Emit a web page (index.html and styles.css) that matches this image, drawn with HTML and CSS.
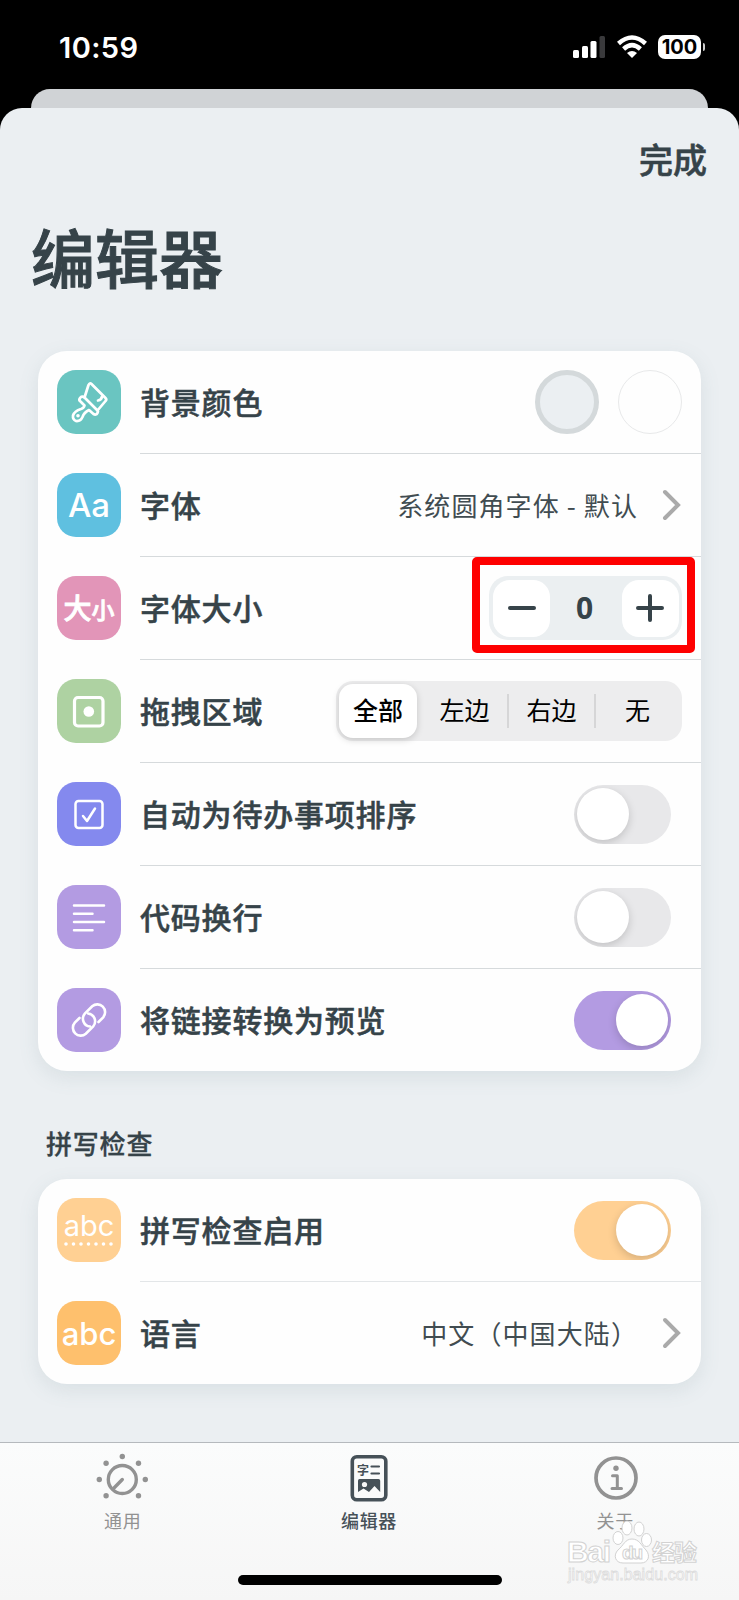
FILE: index.html
```html
<!DOCTYPE html>
<html lang="zh-CN">
<head>
    <meta charset="UTF-8">
    <meta name="viewport" content="width=device-width, initial-scale=1.0">
    <title>编辑器</title>
    <link rel="stylesheet" href="styles.css">
</head>
<body>
    <header class="status-bar">
        <span class="time">10:59</span>
        <div class="status-icons">
            <svg class="signal" width="32" height="22" viewBox="0 0 32 22" fill="#fff">
                <rect x="0" y="14" width="6" height="8" rx="1.5"/>
                <rect x="9" y="10" width="6" height="12" rx="1.5"/>
                <rect x="17.5" y="5" width="6" height="17" rx="1.5"/>
                <rect x="26.5" y="0" width="5.5" height="22" rx="1.5" fill="#3a3a3c"/>
            </svg>
            <svg class="wifi" width="32" height="24" viewBox="0 0 32 24">
                <path d="M2.5 8.500Q16-3.500 29.500 8.500M7.600 14Q16 6.300 24.400 14" fill="none" stroke="#fff" stroke-width="4.500"/>
                <path d="M11 18Q16 13.800 21 18L16 23Z" fill="#fff"/>
            </svg>
            <div class="battery"><span>100</span></div>
        </div>
    </header>

    <div class="sheet-behind"></div>
    <main class="sheet">
        <div class="nav"><button class="done">完成</button></div>
        <h1>编辑器</h1>

        <section class="card">
            <div class="row">
                <div class="icon teal">
                    <svg width="64" height="64" viewBox="0 0 64 64" fill="none" stroke="#fff" stroke-width="2.700" stroke-linecap="round" stroke-linejoin="round">
                        <path d="M34.500 14L48.500 28Q50 29.500 48.500 31L40.500 40.500L27.500 27.500L31.500 15Q32.800 12.500 34.500 14Z"/>
                        <path d="M27.500 27.500Q25 25.500 23 28Q21.500 30 23.500 31.500L27.500 35.500Q27 38 24 39Q17.500 41 16 45.500Q15.500 49.500 19 51Q23.500 51.500 25.500 47Q27 42.500 32 40L36.500 44Q39 45.500 40.500 43Q41.500 41.500 40.500 40.500M41 30.500Q44.500 30 45 26.500"/>
                        <circle cx="21" cy="45.800" r="1.800" fill="#fff" stroke="none"/>
                    </svg>
                </div>
                <div class="row-body">
                    <span class="label">背景颜色</span>
                    <div class="swatches">
                        <span class="swatch selected"></span>
                        <span class="swatch"></span>
                    </div>
                </div>
            </div>
            <div class="row">
                <div class="icon blue"><span class="glyph-aa">Aa</span></div>
                <div class="row-body">
                    <span class="label">字体</span>
                    <span class="value">系统圆角字体 - 默认</span>
                    <svg class="chevron" width="19" height="32" viewBox="0 0 19 32"><path d="M3 3L16 16L3 29"/></svg>
                </div>
            </div>
            <div class="row">
                <div class="icon pink"><span class="glyph-size">大<small>小</small></span></div>
                <div class="row-body">
                    <span class="label">字体大小</span>
                    <div class="stepper">
                        <button><svg width="28" height="28" viewBox="0 0 28 28"><path d="M2 14H26"/></svg></button>
                        <span>0</span>
                        <button><svg width="28" height="28" viewBox="0 0 28 28"><path d="M2 14H26M14 2V26"/></svg></button>
                        <div class="highlight"></div>
                    </div>
                </div>
            </div>
            <div class="row">
                <div class="icon green">
                    <svg width="64" height="64" viewBox="0 0 64 64">
                        <rect x="17.500" y="18.500" width="28.500" height="28.500" rx="3.500" fill="none" stroke="#fff" stroke-width="3.200"/>
                        <circle cx="31.800" cy="32.500" r="5.300" fill="#fff"/>
                    </svg>
                </div>
                <div class="row-body">
                    <span class="label">拖拽区域</span>
                    <div class="segmented">
                        <span class="active">全部</span>
                        <span>左边</span>
                        <span>右边</span>
                        <span>无</span>
                    </div>
                </div>
            </div>
            <div class="row">
                <div class="icon indigo">
                    <svg width="64" height="64" viewBox="0 0 64 64" fill="none" stroke="#fff" stroke-width="2.500" stroke-linecap="round" stroke-linejoin="round">
                        <rect x="18.500" y="19" width="27" height="27" rx="3"/>
                        <path d="M26 34L30 39L38 26.500"/>
                    </svg>
                </div>
                <div class="row-body">
                    <span class="label">自动为待办事项排序</span>
                    <span class="toggle"></span>
                </div>
            </div>
            <div class="row">
                <div class="icon purple">
                    <svg width="64" height="64" viewBox="0 0 64 64" fill="none" stroke="#fff" stroke-width="2.500" stroke-linecap="round">
                        <path d="M17 20.500H47M17 28.700H35.500M17 37H47M17 45.200H35.500"/>
                    </svg>
                </div>
                <div class="row-body">
                    <span class="label">代码换行</span>
                    <span class="toggle"></span>
                </div>
            </div>
            <div class="row">
                <div class="icon purple">
                    <svg width="64" height="64" viewBox="0 0 64 64" fill="none" stroke="#fff" stroke-width="2.600" stroke-linecap="round">
                        <path d="M41.500 34L46.200 29.300A7.800 7.800 0 0 0 35.200 18.300L27.800 25.700A7.800 7.800 0 0 0 33 38.500"/>
                        <path d="M22.500 30L17.800 34.700A7.800 7.800 0 0 0 28.800 45.700L36.200 38.300A7.800 7.800 0 0 0 31 25.500"/>
                    </svg>
                </div>
                <div class="row-body">
                    <span class="label">将链接转换为预览</span>
                    <span class="toggle on"></span>
                </div>
            </div>
        </section>

        <h2>拼写检查</h2>
        <section class="card light">
            <div class="row">
                <div class="icon peach">
                    <div class="spell">
                        <span>abc</span>
                        <svg width="50" height="4" viewBox="0 0 50 4"><path d="M2 2H49"/></svg>
                    </div>
                </div>
                <div class="row-body">
                    <span class="label">拼写检查启用</span>
                    <span class="toggle on orange"></span>
                </div>
            </div>
            <div class="row">
                <div class="icon amber"><span class="glyph-abc">abc</span></div>
                <div class="row-body">
                    <span class="label">语言</span>
                    <span class="value">中文（中国大陆）</span>
                    <svg class="chevron" width="19" height="32" viewBox="0 0 19 32"><path d="M3 3L16 16L3 29"/></svg>
                </div>
            </div>
        </section>
    </main>

    <nav class="tab-bar">
        <a class="tab">
            <svg width="54" height="54" viewBox="0 0 54 54">
                <circle cx="26.300" cy="27.500" r="14" fill="none" stroke="#929292" stroke-width="3.400"/>
                <path d="M26.300 27.500L18 36" stroke="#929292" stroke-width="3.400" stroke-linecap="round"/>
                <g fill="#929292">
                    <circle cx="26.300" cy="4.500" r="2.700"/>
                    <circle cx="10.100" cy="11.300" r="2.700"/>
                    <circle cx="42.500" cy="11.300" r="2.700"/>
                    <circle cx="3.300" cy="27.500" r="2.700"/>
                    <circle cx="49.300" cy="27.500" r="2.700"/>
                    <circle cx="10.100" cy="43.700" r="2.700"/>
                    <circle cx="42.500" cy="43.700" r="2.700"/>
                </g>
            </svg>
            <span>通用</span>
        </a>
        <a class="tab current">
            <svg width="54" height="54" viewBox="0 0 54 54">
                <rect x="10.300" y="4.800" width="33.500" height="43" rx="4.500" fill="none" stroke="#465158" stroke-width="3.600"/>
                <text x="15" y="22.500" class="doc-char">字</text>
                <path d="M29.500 14.500H37M29.500 21.500H37" stroke="#465158" stroke-width="2.200" stroke-linecap="round"/>
                <path d="M17.500 27H36.500Q38.200 27 38.200 28.700V40L32.500 34L27 40L21.500 36.500L16 40V28.700Q16 27 17.500 27Z" fill="#465158"/>
                <circle cx="22.500" cy="32.500" r="2.600" fill="#f8f8f8"/>
            </svg>
            <span>编辑器</span>
        </a>
        <a class="tab">
            <svg width="54" height="54" viewBox="0 0 54 54" fill="none" stroke="#929292" stroke-linecap="round" stroke-linejoin="round">
                <circle cx="27" cy="26" r="20" stroke-width="3.700"/>
                <path d="M23.500 23.800H28.300V36.500M23 36.500H32.500" stroke-width="3"/>
                <circle cx="27" cy="16.300" r="2.700" fill="#929292" stroke="none"/>
            </svg>
            <span>关于</span>
        </a>
        <div class="home-indicator"></div>
        <svg class="watermark" width="140" height="70" viewBox="0 0 140 70">
            <g class="mark">
                <text x="5" y="46" font-size="30" textLength="44">Bai</text>
                <ellipse cx="56" cy="22" rx="5" ry="6.500"/>
                <ellipse cx="65" cy="12" rx="5" ry="7"/>
                <ellipse cx="77" cy="13" rx="5" ry="7"/>
                <ellipse cx="84.500" cy="24" rx="5" ry="6.500"/>
                <path d="M70 23C77 23 79 29 84 34C89 40 86 47 79 47H61C53 47 51 39 56 34C62 29 63 23 70 23Z"/>
                <text x="60" y="43" font-size="19" textLength="21">du</text>
                <text x="90" y="45" font-size="23" textLength="45">经验</text>
            </g>
            <text class="mark-url" x="6" y="64" font-size="16" textLength="130">jingyan.baidu.com</text>
        </svg>
    </nav>
</body>
</html>
```
FILE: styles.css
```css
* {
    box-sizing: border-box;
}
body {
    margin: 0;
    width: 739px;
    height: 1600px;
    display: flex;
    flex-direction: column;
    overflow: hidden;
    background-color: #000;
    color: #364349;
    font-family: "Noto Sans CJK SC", sans-serif;
}
button {
    border: none;
    padding: 0;
    font-family: inherit;
    color: inherit;
    cursor: pointer;
}
svg {
    display: block;
}

/* status bar */
.status-bar {
    flex: none;
    height: 89px;
    padding: 7px 34px 0 59px;
    display: flex;
    justify-content: space-between;
    align-items: center;
    color: #fff;
}
.time {
    font-family: Inter, sans-serif;
    font-size: 29px;
    font-weight: 600;
    line-height: 40px;
    letter-spacing: 0.4px;
    padding-bottom: 1px;
}
.status-icons {
    display: flex;
    align-items: center;
    gap: 11px;
    padding-bottom: 3px;
}
.wifi {
    margin-right: -1px;
}
.battery {
    width: 43px;
    height: 24px;
    margin-right: 4px;
    border-radius: 7px;
    background-color: #fff;
    color: #000;
    position: relative;
    text-align: center;
    font: 700 20px/24px Inter, sans-serif;
}
.battery::after {
    content: "";
    position: absolute;
    left: 45px;
    top: 8px;
    width: 2px;
    height: 8px;
    border-radius: 0 2px 2px 0;
    background-color: #ccc;
}

/* sheet */
.sheet-behind {
    flex: none;
    height: 19px;
    margin: 0 31px;
    border-radius: 19px 19px 0 0;
    background-color: #d0d3d6;
}
.sheet {
    flex: none;
    height: 1334px;
    padding: 27px 38px 0;
    border-radius: 22px 22px 0 0;
    background-color: #ebeff2;
}
.nav {
    display: flex;
    justify-content: flex-end;
    height: 48px;
    margin-right: -6px;
}
.done {
    background: none;
    font-size: 34px;
    font-weight: 500;
    line-height: 48px;
    -webkit-text-stroke: 0.6px #364349;
}
h1 {
    margin: 28px 0 0 -7px;
    height: 90px;
    font-size: 64px;
    font-weight: 500;
    line-height: 88px;
    -webkit-text-stroke: 1px #364349;
}
h2 {
    margin: 52px 0 16px 8px;
    height: 40px;
    font-size: 26px;
    font-weight: 500;
    line-height: 40px;
    letter-spacing: 0.8px;
    -webkit-text-stroke: 0.3px #364349;
}
.card {
    margin-top: 50px;
    border-radius: 29px;
    background-color: #fefefe;
    width: 663px;
    box-shadow: 0 6px 20px rgba(90, 120, 130, 0.13);
}
.card.light {
    margin-top: 0;
}
.row {
    display: flex;
    align-items: center;
    height: 103px;
    padding-left: 19px;
}
.row:last-child {
    height: 102px;
}
.row-body {
    flex: 1;
    height: 100%;
    margin-left: 19px;
    padding-right: 19px;
    display: flex;
    align-items: center;
    border-bottom: 1px solid #d6dadc;
}
.light .row-body {
    border-bottom-color: #e3e6e8;
}
.row:last-child .row-body {
    border-bottom: none;
}
.label {
    flex: 1;
    padding-bottom: 3px;
    font-size: 30px;
    font-weight: 500;
    letter-spacing: 0.8px;
    -webkit-text-stroke: 0.5px #364349;
}
.value {
    padding-bottom: 2px;
    font-size: 26px;
    letter-spacing: 1.1px;
    color: #414c51;
}
.chevron {
    margin: 0 1px 0 24px;
    fill: none;
    stroke: #aaa;
    stroke-width: 4;
    stroke-linecap: round;
}

/* row icons */
.icon {
    flex: none;
    width: 64px;
    height: 64px;
    margin-bottom: 1px;
    border-radius: 19px;
    display: flex;
    justify-content: center;
    align-items: center;
    color: #fff;
}
.teal { background-color: #6ac5c1; }
.blue { background-color: #5fc0e0; }
.pink { background-color: #e295b8; }
.green { background-color: #aed2a2; }
.indigo { background-color: #8489ee; }
.purple { background-color: #b39be2; }
.peach { background-color: #ffd093; }
.amber { background-color: #fec06d; }

.glyph-aa {
    font: 500 33px/40px Inter, sans-serif;
}
.glyph-size {
    font-size: 28px;
    font-weight: 500;
    line-height: 40px;
    white-space: nowrap;
    -webkit-text-stroke: 0.8px #fff;
}
.glyph-size small {
    font-size: 23px;
}
.glyph-abc {
    padding-top: 3px;
    font: 500 31px/40px Inter, sans-serif;
}
.spell {
    font: 400 29px/32px Inter, sans-serif;
    display: flex;
    flex-direction: column;
    align-items: center;
    margin-bottom: 4px;
}
.spell svg {
    fill: none;
    stroke: #fff;
    stroke-width: 3.6;
    stroke-linecap: round;
    stroke-dasharray: 0 7.5;
}

/* controls */
.swatches {
    display: flex;
    gap: 19px;
}
.swatch {
    width: 64px;
    height: 64px;
    border-radius: 50%;
    border: 1px solid #e8e9ea;
}
.swatch.selected {
    border: 5px solid #d4d9db;
    background-color: #ebeff2;
}
.stepper {
    position: relative;
    width: 193px;
    height: 64px;
    padding: 0 3px 0 4px;
    display: flex;
    justify-content: space-between;
    align-items: center;
    border-radius: 19px;
    background-color: #ebeff1;
    font: 700 30px/40px "Noto Sans", sans-serif;
}
.stepper span {
    margin-right: 3px;
}
.stepper button {
    width: 57px;
    height: 57px;
    border-radius: 17px;
    background-color: #fff;
    display: flex;
    justify-content: center;
    align-items: center;
}
.stepper path {
    stroke: #364349;
    stroke-width: 4;
    stroke-linecap: round;
}
.highlight {
    position: absolute;
    top: -19px;
    left: -17px;
    width: 223px;
    height: 96px;
    border: 8px solid #fe0000;
    border-radius: 5px;
    pointer-events: none;
}
.segmented {
    width: 346px;
    height: 60px;
    padding: 3px;
    display: grid;
    grid-template-columns: 78px 90px 87px 85px;
    align-items: center;
    border-radius: 17px;
    background-color: #ededee;
    font-size: 25px;
    color: #000;
    text-align: center;
}
.segmented span {
    height: 34px;
    line-height: 31px;
}
.segmented span:nth-child(2) {
    padding-left: 5px;
}
.segmented span + span + span {
    border-left: 2px solid #d6d6d7;
}
.segmented .active {
    height: 54px;
    line-height: 51px;
    border-radius: 14px;
    background-color: #fff;
    font-weight: 500;
    box-shadow: 0 2px 7px rgba(0, 0, 0, 0.17);
}
.toggle {
    width: 97px;
    height: 59px;
    margin-right: 11px;
    padding: 3px;
    display: flex;
    border-radius: 30px;
    background-color: #e8e8ea;
    overflow: hidden;
}
.toggle::before {
    content: "";
    width: 52px;
    height: 52px;
    border-radius: 50%;
    background-color: #fff;
    box-shadow: 0 3px 9px rgba(0, 0, 0, 0.17);
}
.toggle.on {
    justify-content: flex-end;
    background-color: #b39be2;
}
.toggle.orange {
    background-color: #ffd093;
}

/* tab bar */
.tab-bar {
    position: relative;
    flex: none;
    height: 158px;
    padding-top: 9px;
    display: grid;
    grid-template-columns: repeat(3, 1fr);
    border-top: 1px solid #b5b9bd;
    background: linear-gradient(#fbfcfc, #f6f6f6);
}
.tab {
    display: flex;
    flex-direction: column;
    align-items: center;
    color: #929292;
    font-size: 18px;
    line-height: 26px;
    letter-spacing: 0.7px;
}
.tab span {
    margin-top: 1px;
    margin-right: 1px;
}
.tab.current {
    color: #465158;
    font-weight: 500;
}
.doc-char {
    font-size: 12px;
    font-weight: 700;
    letter-spacing: 0;
    fill: #465158;
}
.home-indicator {
    position: absolute;
    left: 238px;
    bottom: 15px;
    width: 264px;
    height: 10px;
    border-radius: 5px;
    background-color: #000;
}
.watermark {
    position: absolute;
    left: 562px;
    top: 73px;
    font-family: "Liberation Sans", "Noto Sans CJK SC", sans-serif;
    font-weight: 700;
}
.mark {
    fill: #fff;
    stroke: #d2d2d2;
    stroke-width: 1;
}
.mark-url {
    fill: #fff;
    stroke: #dcdcdc;
    stroke-width: 0.8;
    font-weight: 400;
}
```
